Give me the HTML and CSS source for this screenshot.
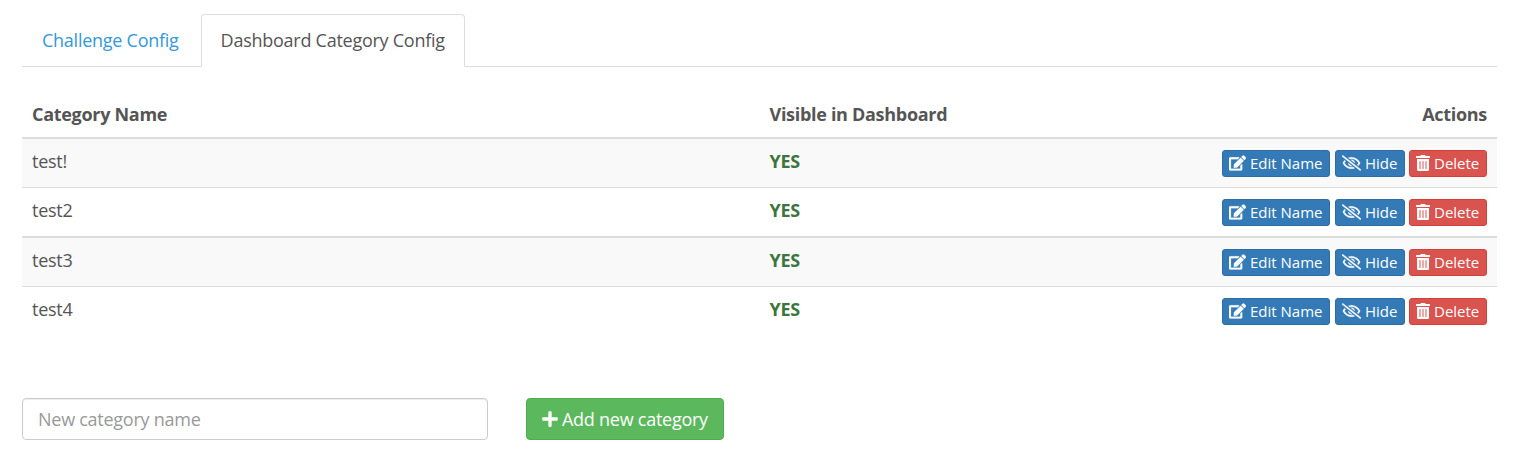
FILE: index.html
```html
<!DOCTYPE html>
<html lang="en">
<head>
<meta charset="utf-8">
<title>Dashboard Category Config</title>
<link rel="stylesheet" href="styles.css">
</head>
<body>
<svg class="sprite" aria-hidden="true">
<symbol id="edit" viewBox="0 0 576 512"><path d="M402.6 83.2l90.2 90.2c3.8 3.800 3.800 10 0 13.800L274.400 405.600l-92.800 10.300c-12.400 1.400-22.900-9.100-21.500-21.500l10.300-92.800L388.800 83.200c3.800-3.800 10-3.800 13.800 0zm162-22.900l-48.800-48.800c-15.200-15.200-39.900-15.200-55.200 0l-35.400 35.400c-3.800 3.800-3.800 10 0 13.800l90.200 90.200c3.800 3.800 10 3.800 13.800 0l35.400-35.400c15.200-15.300 15.200-40 0-55.200zM384 346.200V448H64V128h229.800c3.200 0 6.200-1.300 8.500-3.500l40-40c7.600-7.600 2.200-20.500-8.500-20.500H48C21.500 64 0 85.500 0 112v352c0 26.500 21.500 48 48 48h352c26.500 0 48-21.500 48-48V306.200c0-10.700-12.900-16-20.500-8.500l-40 40c-2.200 2.300-3.500 5.300-3.500 8.500z"/></symbol>
<symbol id="hide" viewBox="0 0 640 512"><path d="M634 471L36 3.500A16 16 0 0 0 13.500 6l-10 12.500A16 16 0 0 0 6 41l598 467.500a16 16 0 0 0 22.500-2.500l10-12.500A16 16 0 0 0 634 471zM296.800 146.500l134.800 105.400C429.400 191.900 380.500 144 320 144a112.300 112.300 0 0 0-23.200 2.500zm46.400 219L208.400 260.100C210.600 320.100 259.500 368 320 368a113 113 0 0 0 23.200-2.500zM320 112c98.700 0 189.100 55 237.900 144a285.500 285.500 0 0 1-44 60.200l37.700 29.500a333.700 333.700 0 0 0 52.900-75.100 32.400 32.400 0 0 0 0-29.200C550.300 135.600 442.900 64 320 64c-36.700 0-71.700 7-104.600 18.800l46.400 36.300c18.900-4.300 38.300-7.100 58.200-7.100zm0 288c-98.700 0-189.100-55-237.900-144a285.500 285.500 0 0 1 44.100-60.200l-37.700-29.500a333.700 333.700 0 0 0-52.900 75.100 32.400 32.400 0 0 0 0 29.200C89.700 376.400 197.100 448 320 448c36.700 0 71.700-7.100 104.600-18.800l-46.400-36.300C359.300 397.200 339.900 400 320 400z"/></symbol>
<symbol id="trash" viewBox="0 0 448 512"><path d="M32 464a48 48 0 0 0 48 48h288a48 48 0 0 0 48-48V128H32zm272-256a16 16 0 0 1 32 0v224a16 16 0 0 1-32 0zm-96 0a16 16 0 0 1 32 0v224a16 16 0 0 1-32 0zm-96 0a16 16 0 0 1 32 0v224a16 16 0 0 1-32 0zM432 32H312l-9.400-18.700A24 24 0 0 0 281.100 0H166.800a23.700 23.700 0 0 0-21.400 13.300L136 32H16A16 16 0 0 0 0 48v32a16 16 0 0 0 16 16h416a16 16 0 0 0 16-16V48a16 16 0 0 0-16-16z"/></symbol>
<symbol id="plus" viewBox="0 0 448 512"><path d="M416 208H272V64c0-17.700-14.300-32-32-32h-32c-17.700 0-32 14.300-32 32v144H32c-17.700 0-32 14.300-32 32v32c0 17.700 14.300 32 32 32h144v144c0 17.700 14.300 32 32 32h32c17.700 0 32-14.300 32-32V304h144c17.700 0 32-14.300 32-32v-32c0-17.700-14.300-32-32-32z"/></symbol>
</svg>
<ul class="tabs">
<li class="tab"><a>Challenge Config</a></li>
<li class="tab active"><a>Dashboard Category Config</a></li>
</ul>
<table class="table">
<thead><tr><th class="col-name">Category Name</th><th>Visible in Dashboard</th><th class="actions">Actions</th></tr></thead>
<tbody>
<tr><td>test!</td><td class="yes">YES</td><td><div class="buttons"><button class="btn edit"><svg><use href="#edit"/></svg>Edit Name</button><button class="btn hide"><svg><use href="#hide"/></svg>Hide</button><button class="btn delete"><svg><use href="#trash"/></svg>Delete</button></div></td></tr>
<tr><td>test2</td><td class="yes">YES</td><td><div class="buttons"><button class="btn edit"><svg><use href="#edit"/></svg>Edit Name</button><button class="btn hide"><svg><use href="#hide"/></svg>Hide</button><button class="btn delete"><svg><use href="#trash"/></svg>Delete</button></div></td></tr>
</tbody>
<tbody>
<tr><td>test3</td><td class="yes">YES</td><td><div class="buttons"><button class="btn edit"><svg><use href="#edit"/></svg>Edit Name</button><button class="btn hide"><svg><use href="#hide"/></svg>Hide</button><button class="btn delete"><svg><use href="#trash"/></svg>Delete</button></div></td></tr>
<tr><td>test4</td><td class="yes">YES</td><td><div class="buttons"><button class="btn edit"><svg><use href="#edit"/></svg>Edit Name</button><button class="btn hide"><svg><use href="#hide"/></svg>Hide</button><button class="btn delete"><svg><use href="#trash"/></svg>Delete</button></div></td></tr>
</tbody>
</table>
<form class="new-category">
<input class="name-input" type="text" placeholder="New category name">
<button class="add" type="button"><svg><use href="#plus"/></svg>Add new category</button>
</form>
</body>
</html>
```
FILE: styles.css
```css
* { box-sizing: border-box; }
body { margin: 0; padding: 14px 20px 0 22px; background: #fff; color: #555; font: 400 18px/26px "Open Sans", sans-serif; letter-spacing: -.26px; overflow: hidden; }
.sprite { display: none; }
svg { fill: currentColor; flex: none; }
.tabs { display: flex; height: 53px; margin: 0; padding: 0; list-style: none; border-bottom: 1px solid #ddd; }
.tab { height: 53px; padding: 12px 19px; border: 1px solid transparent; border-radius: 4px 4px 0 0; color: #3498db; margin-right: 2px; white-space: nowrap; }
.tab.active { color: #555; background: #fff; border-color: #ddd #ddd #fff; }
.table { width: 100%; margin-top: 23px; table-layout: fixed; border-collapse: collapse; }
.col-name { width: 50%; }
th { height: 48px; padding: 0 10px; text-align: left; font-weight: 700; letter-spacing: -.3px; border-bottom: 2px solid #ddd; }
th.actions { text-align: right; }
td { height: 49.5px; padding: 9px 10px; vertical-align: top; border-top: 1px solid #ddd; }
tbody + tbody { border-top: 2px solid #ddd; }
tbody tr:nth-child(odd) { background: #f9f9f9; }
.yes { color: #3c763d; font-weight: 700; letter-spacing: -.3px; }
.buttons { display: flex; justify-content: flex-end; gap: 4px; padding-top: 2px; }
.btn { display: flex; align-items: center; gap: 4px; height: 27px; padding: 0 6px 1px; border: 1px solid #2e6da4; border-radius: 3px; background: #337ab7; color: #fff; font: 400 15px/22px "Open Sans", sans-serif; white-space: nowrap; }
.edit { width: 108px; margin-right: 1px; }
.hide { width: 70px; }
.delete { width: 78px; background: #d9534f; border-color: #d43f3a; }
.edit svg { width: 17px; height: 16px; stroke: currentColor; stroke-width: 8px; }
.hide svg { width: 19px; height: 16px; stroke: currentColor; stroke-width: 10px; }
.delete svg { width: 14px; height: 16px; }
.new-category { display: flex; gap: 38px; margin: 62px 0 0; }
.name-input { width: 466px; height: 42px; padding: 0 15px; border: 1px solid #ccc; border-radius: 4px; box-shadow: inset 0 1px 1px rgba(0,0,0,.075); font: 400 18px/26px "Open Sans", sans-serif; letter-spacing: -.26px; }
.name-input::placeholder { color: #999; opacity: 1; }
.add { display: flex; align-items: center; gap: 4px; width: 198px; height: 42px; padding: 0 15px 1px; border: 1px solid #4cae4c; border-radius: 4px; background: #5cb85c; color: #fff; font: 400 18px/26px "Open Sans", sans-serif; letter-spacing: -.26px; white-space: nowrap; }
.add svg { width: 16px; height: 18px; }
```
